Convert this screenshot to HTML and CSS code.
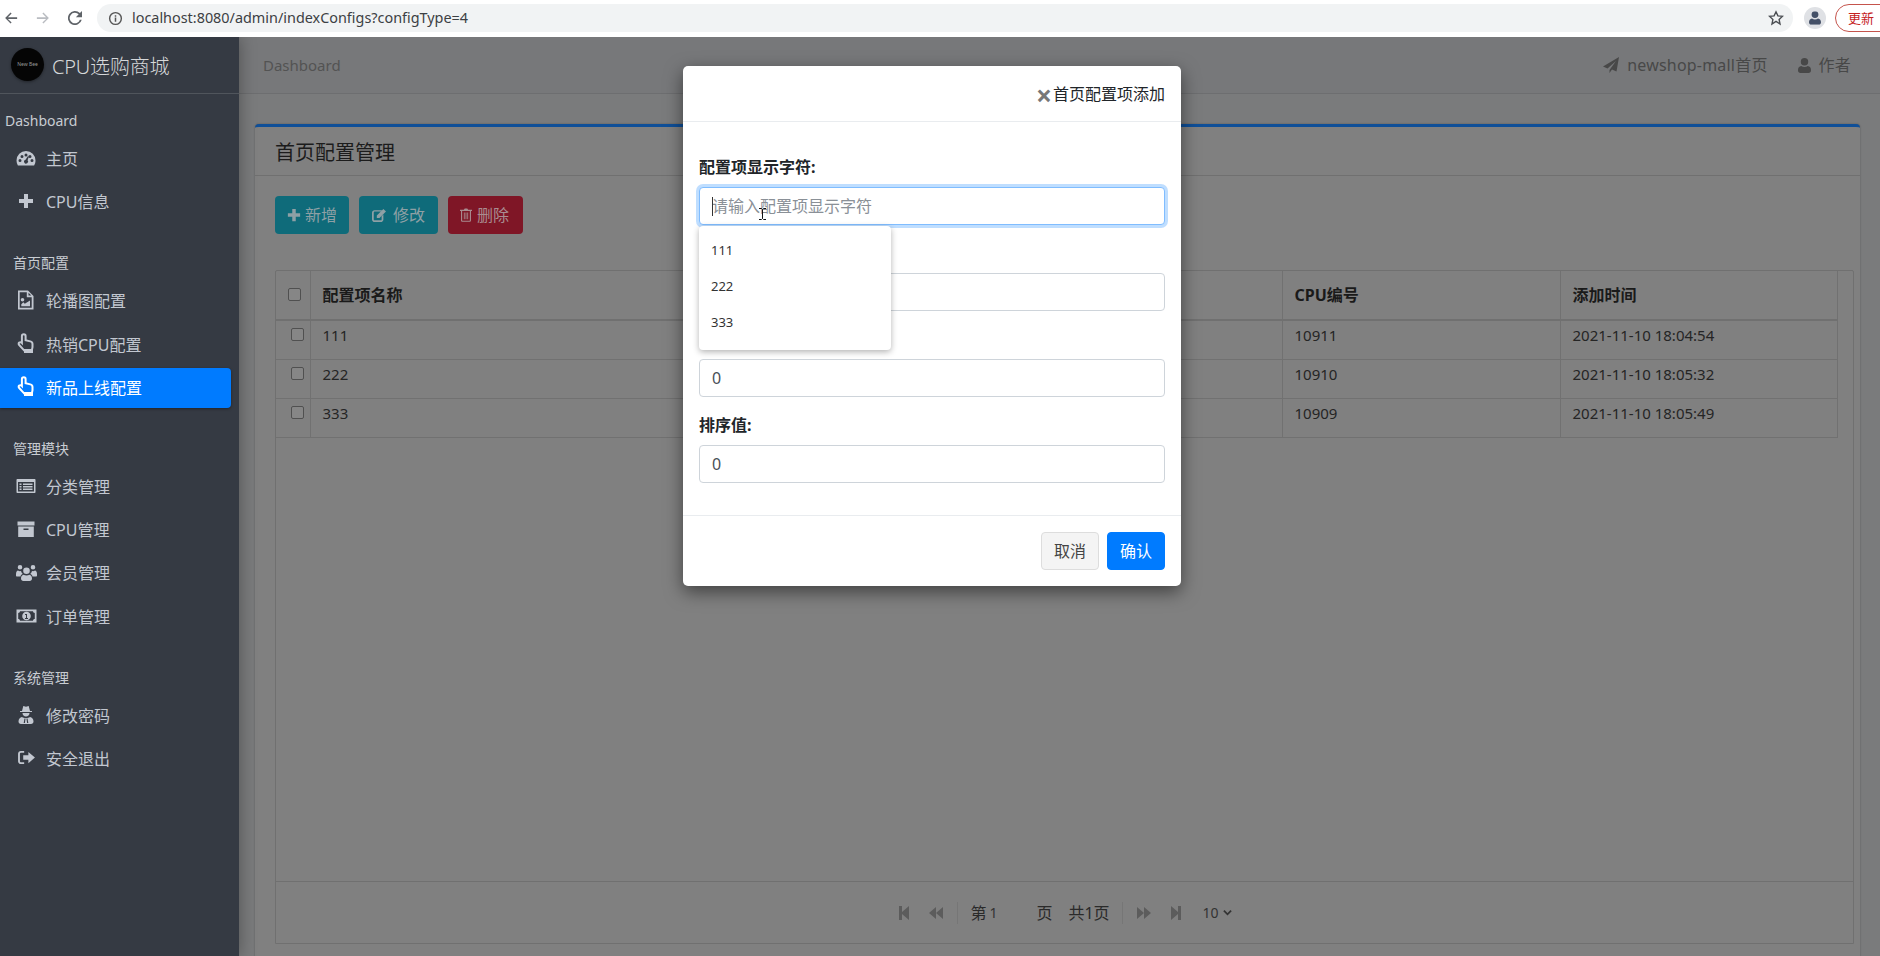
FILE: index.html
```html
<!DOCTYPE html>
<html lang="zh-CN">
<head>
<meta charset="utf-8">
<title>首页配置管理</title>
<link rel="stylesheet" href="styles.css">
</head>
<body>
<svg class="sprite" xmlns="http://www.w3.org/2000/svg">
  <symbol id="i-plus" viewBox="0 0 16 16"><path d="M6 1h4v5h5v4h-5v5H6v-5H1V6h5z"/></symbol>
  <symbol id="i-gauge" viewBox="0 0 20 16"><path fill-rule="evenodd" d="M10 1a9.500 9.500 0 0 1 9.500 9.500c0 1.900-.5 3.500-1.400 4.900H1.900A9.300 9.300 0 0 1 .5 10.500 9.500 9.500 0 0 1 10 1zM4 9a1.500 1.500 0 1 0 0 3 1.500 1.500 0 0 0 0-3zm2-4a1.500 1.500 0 1 0 0 3 1.500 1.500 0 0 0 0-3zm4-1.500a1.500 1.500 0 1 0 0 3 1.500 1.500 0 0 0 0-3zM14 5a1.500 1.500 0 1 0 0 3 1.500 1.500 0 0 0 0-3zm2 4a1.500 1.500 0 1 0 0 3 1.500 1.500 0 0 0 0-3zM12.200 5.800 9.500 9.700a2 2 0 1 0 2.100.6l1.400-4.300z"/></symbol>
  <symbol id="i-image" viewBox="0 0 17 20"><path fill-rule="evenodd" d="M1 .5h10l5.500 5.500v13.500H1zM2.700 2.200v15.600h12V7.300H9.800V2.200zm8.800.6v2.800h2.800zM5.500 8a1.800 1.800 0 1 1 0 3.600 1.800 1.800 0 0 1 0-3.600zM13 10.500v5.700H4.300v-2l2-2 1.500 1.500z"/></symbol>
  <symbol id="i-hand" viewBox="0 0 18 21"><path fill="none" stroke="currentColor" stroke-width="2" d="M6.800 1.200c1 0 1.800.8 1.800 1.800v4.300l4.700 1.100c1.200.3 2.200 1.200 2.200 2.500v3.200l-.7 3.500H7.300L2.200 12c-.8-.8-.7-1.800 0-2.400.8-.6 1.700-.5 2.500.2l.2.200V3c0-1 .9-1.800 1.900-1.800z"/><path d="M7 16h9v4H7z"/></symbol>
  <symbol id="i-list" viewBox="0 0 20 16"><path fill-rule="evenodd" d="M1.500 1h17c.600 0 1 .4 1 1v12c0 .6-.4 1-1 1h-17c-.6 0-1-.4-1-1V2c0-.6.4-1 1-1zM2 4v9.500h16V4zm1.500 1.500h2v1.500h-2zm3.500 0h9.500V7H7zM3.500 8h2v1.500h-2zM7 8h9.500v1.500H7zm-3.500 2.500h2V12h-2zm3.500 0h9.500V12H7z"/></symbol>
  <symbol id="i-archive" viewBox="0 0 18 16"><path fill-rule="evenodd" d="M.5.500h17v4H.5zM1.200 5.500h15.600V16H1.200zM6.500 7.500v1.500h5V7.500z"/></symbol>
  <symbol id="i-users" viewBox="0 0 21 17"><path d="M4 1a2.300 2.300 0 1 1 0 4.600A2.300 2.300 0 0 1 4 1zm13 0a2.300 2.300 0 1 1 0 4.600A2.300 2.300 0 0 1 17 1zM10.500 3.500a3.300 3.300 0 1 1 0 6.600 3.300 3.300 0 0 1 0-6.600zM0 10c0-2 1-3.500 2-3.500.8.600 2 .8 3 .5.300 1.200 1 2.300 1.800 3-1 .3-2 1.200-2.300 2.500H1c-.6 0-1-.4-1-1zm21 0c0-2-1-3.500-2-3.500-.8.600-2 .8-3 .5-.3 1.200-1 2.300-1.800 3 1 .3 2 1.200 2.300 2.500H20c.6 0 1-.4 1-1zM7.500 10.700c1.700 1.100 4.300 1.100 6 0 1.500.2 2.500 1.700 2.500 3.800 0 1.500-1 2.500-2.300 2.500H7.300C6 17 5 16 5 14.500c0-2.100 1-3.600 2.500-3.800z"/></symbol>
  <symbol id="i-money" viewBox="0 0 21 14"><path fill-rule="evenodd" d="M.500.500h20v13H.500zM4 2.300c0 1-.8 1.700-1.800 1.700v6c1 0 1.800.7 1.800 1.700h13c0-1 .8-1.700 1.800-1.700V4c-1 0-1.800-.7-1.800-1.700zM10.500 2.700a4.300 4.300 0 1 1 0 8.600 4.300 4.300 0 0 1 0-8.600zM9 5v1h1v3H9v1h3V9h-1V5z"/></symbol>
  <symbol id="i-secret" viewBox="0 0 16 20"><path fill-rule="evenodd" d="M5.300 1 8 1.800 10.700 1l1.300 5H14v1H2V6h2zM4.500 8h7c0 2-1.500 3.500-3.500 3.500S4.500 10 4.500 8zM4 12c1 .7 2.300 1 4 1s3-.3 4-1c2 .3 3.500 2 3.500 4.500 0 1.500-1 2.500-2.500 2.500H3c-1.500 0-2.500-1-2.500-2.500C.5 14 2 12.300 4 12zm2.500 1.500L5.700 18h1.200l.6-4.500zm3 0-1 0 .6 4.500h1.200z"/></symbol>
  <symbol id="i-signout" viewBox="0 0 18 16"><path d="M6.500 1v2H3C2.400 3 2 3.400 2 4v8c0 .6.400 1 1 1h3.500v2H3c-1.700 0-3-1.300-3-3V4c0-1.700 1.300-3 3-3zM11 2l7 6-7 6v-3.500H5.500v-5H11z"/></symbol>
  <symbol id="i-edit" viewBox="0 0 16 16"><path d="M11 9.500V13c0 .6-.4 1-1 1H3c-.6 0-1-.4-1-1V5c0-.6.4-1 1-1h7l1.500-1.500H3C1.300 2.500 0 3.800 0 5.500v7.500c0 1.700 1.300 3 3 3h7c1.700 0 3-1.300 3-3V7.500zM13 1l3 3-7.500 7.500H5.500v-3z"/></symbol>
  <symbol id="i-trash" viewBox="0 0 14 16"><path fill-rule="evenodd" d="M4.500 2 5.500.5h3L9.500 2H14v1.200h-1.200V14c0 1-.7 2-1.800 2H3c-1.100 0-1.800-1-1.800-2V3.200H0V2zm-2 1.200V14c0 .5.300.8.500.8h8c.2 0 .5-.3.500-.8V3.200zM4.500 5h1v8h-1zm2 0h1v8h-1zm2 0h1v8h-1z"/></symbol>
  <symbol id="i-plane" viewBox="0 0 16 16"><path d="M16 0 13.500 14.500 9 12.500 6.500 16V13L13 4 4.500 11.500 0 9.500z"/></symbol>
  <symbol id="i-user" viewBox="0 0 14 16"><path d="M7 0a4 4 0 1 1 0 8 4 4 0 0 1 0-8zM3.500 8.500c1 .8 2.200 1.200 3.500 1.200s2.500-.4 3.500-1.200C12.800 8.800 14 10.500 14 13c0 1.800-1.100 3-2.700 3H2.700C1.100 16 0 14.800 0 13c0-2.500 1.200-4.200 3.500-4.500z"/></symbol>
  <symbol id="i-first" viewBox="0 0 10 14"><path d="M0 0h3v6L10 0v14L3 8v6H0z"/></symbol>
  <symbol id="i-prev" viewBox="0 0 14 14"><path d="M0 7l7-6v6l7-6v12L7 7v6z"/></symbol>
  <symbol id="i-next" viewBox="0 0 14 14"><path d="M14 7 7 1v6L0 1v12l7-6v6z"/></symbol>
  <symbol id="i-last" viewBox="0 0 10 14"><path d="M10 0H7v6L0 0v14l7-6v6h3z"/></symbol>
</svg>

<header class="chrome">
  <svg class="nav-glyph" viewBox="0 0 16 16"><path d="M15 7H4.500l4.200-4.200L7.500 1.700 1.300 8l6.200 6.300 1.200-1.100L4.500 9H15z"/></svg>
  <svg class="nav-glyph nav-glyph-off" viewBox="0 0 16 16"><path d="M1 7h10.500L7.300 2.800l1.200-1.100L14.700 8l-6.200 6.300-1.200-1.100L11.500 9H1z"/></svg>
  <svg class="nav-glyph nav-glyph-last" viewBox="0 0 16 16"><path d="M13.600 2.400A8 8 0 1 0 15.700 10h-2.100a6 6 0 1 1-1.400-6.200L9 7h7V0z"/></svg>
  <div class="omnibox">
    <svg class="info-glyph" viewBox="0 0 16 16"><path fill-rule="evenodd" d="M8 1a7 7 0 1 1 0 14A7 7 0 0 1 8 1zm0 1.500a5.500 5.500 0 1 0 0 11 5.500 5.500 0 0 0 0-11zM7.200 7h1.600v4.500H7.200zm0-2.500h1.600V6H7.200z"/></svg>
    <span class="url">localhost:8080/admin/indexConfigs?configType=4</span>
    <svg class="star-glyph" viewBox="0 0 16 16"><path fill="none" stroke="currentColor" stroke-width="1.400" d="m8 1.800 1.900 4.100 4.500.5-3.300 3.100.9 4.500L8 11.300l-4 2.700.9-4.500L1.600 6.400l4.500-.5z"/></svg>
  </div>
  <div class="avatar"><svg viewBox="0 0 14 16"><use href="#i-user"/></svg></div>
  <div class="update-pill">更新</div>
</header>

<div class="app">
  <aside class="sidebar">
    <div class="brand">
      <div class="brand-logo">New Bee</div>
      <span class="brand-name">CPU选购商城</span>
    </div>
    <nav class="menu">
      <div class="menu-head menu-head-first">Dashboard</div>
      <a class="menu-item"><svg class="ic ic-gauge"><use href="#i-gauge"/></svg>主页</a>
      <a class="menu-item"><svg class="ic ic-plus"><use href="#i-plus"/></svg>CPU信息</a>

      <div class="menu-head menu-gap">首页配置</div>
      <a class="menu-item"><svg class="ic ic-image"><use href="#i-image"/></svg>轮播图配置</a>
      <a class="menu-item"><svg class="ic ic-hand"><use href="#i-hand"/></svg>热销CPU配置</a>
      <a class="menu-item menu-item-active"><svg class="ic ic-hand"><use href="#i-hand"/></svg>新品上线配置</a>

      <div class="menu-head menu-gap">管理模块</div>
      <a class="menu-item"><svg class="ic ic-list"><use href="#i-list"/></svg>分类管理</a>
      <a class="menu-item"><svg class="ic ic-archive"><use href="#i-archive"/></svg>CPU管理</a>
      <a class="menu-item"><svg class="ic ic-users"><use href="#i-users"/></svg>会员管理</a>
      <a class="menu-item"><svg class="ic ic-money"><use href="#i-money"/></svg>订单管理</a>

      <div class="menu-head menu-gap">系统管理</div>
      <a class="menu-item"><svg class="ic ic-secret"><use href="#i-secret"/></svg>修改密码</a>
      <a class="menu-item"><svg class="ic ic-signout"><use href="#i-signout"/></svg>安全退出</a>
    </nav>
  </aside>

  <main class="main">
    <div class="topbar">
      <span class="crumb">Dashboard</span>
      <div class="top-links">
        <a class="top-link"><svg class="top-icon"><use href="#i-plane"/></svg>newshop-mall首页</a>
        <a class="top-link"><svg class="top-icon top-icon-user"><use href="#i-user"/></svg>作者</a>
      </div>
    </div>
    <section class="content">
      <div class="card">
        <h1 class="card-title">首页配置管理</h1>
        <div class="card-body">
          <div class="toolbar">
            <button class="btn btn-info"><svg class="btn-icon"><use href="#i-plus"/></svg>新增</button>
            <button class="btn btn-info btn-wide"><svg class="btn-icon"><use href="#i-edit"/></svg>修改</button>
            <button class="btn btn-danger"><svg class="btn-icon btn-icon-sm"><use href="#i-trash"/></svg>删除</button>
          </div>
          <div class="grid">
            <table class="grid-table">
              <colgroup>
                <col class="col-check"><col class="col-name"><col class="col-link"><col class="col-sort"><col class="col-cpu"><col class="col-time">
              </colgroup>
              <thead>
                <tr>
                  <th class="cell-check-head"><input type="checkbox" class="check"></th>
                  <th>配置项名称</th><th>跳转链接</th><th>排序值</th><th>CPU编号</th><th>添加时间</th>
                </tr>
              </thead>
              <tbody>
                <tr><td class="cell-check"><input type="checkbox" class="check"></td><td>111</td><td>##</td><td>1</td><td>10911</td><td>2021-11-10 18:04:54</td></tr>
                <tr><td class="cell-check"><input type="checkbox" class="check"></td><td>222</td><td>##</td><td>2</td><td>10910</td><td>2021-11-10 18:05:32</td></tr>
                <tr><td class="cell-check"><input type="checkbox" class="check"></td><td>333</td><td>##</td><td>3</td><td>10909</td><td>2021-11-10 18:05:49</td></tr>
              </tbody>
            </table>
            <div class="pager">
              <svg class="pg-icon pg-end"><use href="#i-first"/></svg>
              <svg class="pg-icon pg-prev"><use href="#i-prev"/></svg>
              <span class="pg-sep"></span>
              <span class="pg-text">第</span><span class="pg-input">1</span><span class="pg-text">页</span>
              <span class="pg-text pg-total">共1页</span>
              <span class="pg-sep"></span>
              <svg class="pg-icon pg-next"><use href="#i-next"/></svg>
              <svg class="pg-icon pg-end"><use href="#i-last"/></svg>
              <span class="pg-size">10<svg class="pg-chevron" viewBox="0 0 10 7"><path fill="none" stroke="currentColor" stroke-width="2" d="m1 1.500 4 4 4-4"/></svg></span>
            </div>
          </div>
        </div>
      </div>
    </section>
  </main>

  <div class="modal" role="dialog">
    <div class="modal-header">
      <span class="modal-close">×</span>
      <span class="modal-title">首页配置项添加</span>
    </div>
    <form class="modal-body">
      <div class="field">
        <label class="field-label">配置项显示字符:</label>
        <div class="input-wrap">
          <input class="input input-focus" placeholder="请输入配置项显示字符">
          <span class="text-caret"></span>
          <svg class="ibeam" viewBox="0 0 7 12"><path fill="none" stroke="#111" d="M0 .5h2.500l1 1 1-1H7M3.500 1.500v9M0 11.500h2.500l1-1 1 1H7"/></svg>
          <ul class="suggest">
            <li>111</li>
            <li>222</li>
            <li>333</li>
          </ul>
        </div>
      </div>
      <div class="field">
        <label class="field-label">跳转链接:</label>
        <input class="input" placeholder="">
      </div>
      <div class="field">
        <label class="field-label">商品编号:</label>
        <input class="input" value="0">
      </div>
      <div class="field">
        <label class="field-label">排序值:</label>
        <input class="input" value="0">
      </div>
    </form>
    <div class="modal-footer">
      <button class="mbtn mbtn-light">取消</button>
      <button class="mbtn mbtn-primary">确认</button>
    </div>
  </div>
</div>
</body>
</html>
```

FILE: styles.css
```css
* { box-sizing: border-box; }
html, body { margin: 0; padding: 0; height: 100%; }
body {
  width: 1880px;
  height: 956px;
  overflow: hidden;
  position: relative;
  background: #fff;
  font-family: "Noto Sans", "Noto Sans CJK SC", sans-serif;
  font-size: 16px;
  line-height: 24px;
  color: #222;
}
.sprite { display: none; }
svg { fill: currentColor; display: block; flex: none; }

/* browser chrome */
.chrome {
  height: 37px;
  padding: 4px 0 5px;
  display: flex;
  align-items: center;
  background: #fff;
  overflow: hidden;
}
.nav-glyph { width: 14px; height: 14px; margin-left: 4px; margin-right: 14px; color: #5f6368; }
.nav-glyph-off { color: #b9bcc1; }
.nav-glyph-last { margin-right: 15px; }
.omnibox {
  width: 1696px;
  height: 28px;
  flex: none;
  padding: 0 9px 0 11px;
  display: flex;
  align-items: center;
  background: #f1f3f4;
  border-radius: 14px;
  color: #5f6368;
}
.info-glyph { width: 15px; height: 15px; margin-right: 9px; color: #555; }
.url { flex: 1; font-size: 14.400px; color: #3c4043; line-height: 20px; }
.star-glyph { width: 16px; height: 16px; color: #4a4d52; }
.avatar {
  width: 22px;
  height: 22px;
  flex: none;
  margin-left: 11px;
  border-radius: 50%;
  background: #dfe1e5;
  color: #445067;
  display: flex;
  align-items: center;
  justify-content: center;
}
.avatar svg { width: 12px; height: 14px; }
.update-pill {
  width: 60px;
  height: 28px;
  margin-left: 9px;
  padding-left: 12px;
  flex: none;
  border: 1px solid #c5544c;
  border-radius: 14px;
  color: #c5221f;
  font-size: 13px;
  line-height: 26px;
}

/* layout */
.app { display: flex; height: 919px; position: relative; overflow: hidden; }

.sidebar {
  width: 239px;
  flex: none;
  background: #353a43;
  color: #c2c7d0;
  box-shadow: 0 0 16px rgba(0, 0, 0, .35);
  position: relative;
  z-index: 2;
}
.brand {
  height: 57px;
  padding: 0 0 1px 11px;
  display: flex;
  align-items: center;
  gap: 8px;
  border-bottom: 1px solid #50555c;
}
.brand-logo {
  width: 33px;
  height: 33px;
  border-radius: 50%;
  background: #050505;
  color: #9a9a9a;
  font-size: 5px;
  line-height: 33px;
  text-align: center;
  white-space: nowrap;
  box-shadow: 0 1px 3px rgba(0, 0, 0, .4);
}
.brand-name { padding-top: 4px; font-size: 20px; font-weight: 300; color: #d6d8da; letter-spacing: -.2px; }
.menu { padding-top: 9px; }
.menu-head {
  height: 36px;
  padding-left: 13px;
  font-size: 14px;
  line-height: 36px;
  color: #c8ccd2;
}
.menu-head-first { padding-left: 5px; }
.menu-gap { margin-top: 23px; }
.menu-item {
  height: 40px;
  width: 231px;
  margin-bottom: 3.250px;
  padding-left: 14px;
  display: flex;
  align-items: center;
  gap: 8px;
  font-size: 16px;
  color: #c2c7d0;
  border-radius: 0 4px 4px 0;
}
.menu-item-active {
  background: #007bff;
  color: #fff;
  box-shadow: 0 1px 3px rgba(0, 0, 0, .4);
}
.ic { margin: 0 auto; }
.ic-gauge { width: 20px; height: 16px; margin: -2px 2px 0; }
.ic-plus { width: 16px; height: 16px; margin: -3px 4px 0; }
.ic-image { width: 17px; height: 20px; margin: -2px 4px 0 3px; }
.ic-hand { width: 18px; height: 21px; margin: -2px 3px 0; }
.ic-list { width: 20px; height: 16px; margin: -2px 2px 0; }
.ic-archive { width: 18px; height: 16px; margin: -2px 3px 0; }
.ic-users { width: 21px; height: 17px; margin: -2px 1px 0 2px; }
.ic-money { width: 21px; height: 14px; margin: -2px 1px 0 2px; }
.ic-secret { width: 16px; height: 20px; margin: -2px 4px 0; }
.ic-signout { width: 17px; height: 15px; margin: -2px 3px 0 4px; }

/* dimmed page behind the dialog */
.main { flex: 1; min-width: 0; background: #7a7b7c; }
.topbar {
  height: 57px;
  padding: 0 29px 0 24px;
  display: flex;
  align-items: center;
  justify-content: space-between;
  background: #77787a;
  border-bottom: 1px solid #6d6e70;
  color: #4a4a4a;
}
.crumb { font-size: 15px; color: #535353; }
.top-links { display: flex; gap: 30px; }
.top-link { display: flex; align-items: center; gap: 8px; font-size: 16px; color: #484848; letter-spacing: .2px; }
.top-icon { width: 16px; height: 16px; }
.top-icon-user { width: 13px; height: 15px; }

.content { padding: 30px 20px 0 16px; }
.card {
  height: 900px;
  background: #808080;
  border-top: 3px solid #0f4f98;
  border-radius: 4px 4px 0 0;
  box-shadow: 0 0 2px rgba(0, 0, 0, .3);
}
.card-title {
  height: 49px;
  margin: 0;
  padding: 3px 20px 0;
  font-size: 20px;
  font-weight: 400;
  line-height: 46px;
  color: #1c1c1c;
  border-bottom: 1px solid #707070;
}
.card-body { padding: 20px 6px 0 20px; }
.toolbar { display: flex; gap: 10px; margin-bottom: 36px; }
.btn {
  height: 38px;
  padding: 0 12px;
  display: flex;
  align-items: center;
  gap: 4px;
  border: 0;
  border-radius: 4px;
  font: inherit;
  color: #8ea0a5;
}
.btn-wide { gap: 7px; padding: 0 13px; }
.btn-info { background: #0f6b7a; }
.btn-danger { background: #7f1626; gap: 5px; padding-right: 14px; color: #a98c90; }
.btn-icon { width: 14px; height: 14px; }
.btn-icon-sm { width: 12px; height: 14px; }

.grid {
  height: 674px;
  border: 1px solid #707070;
  border-radius: 2px 2px 0 0;
  display: flex;
  flex-direction: column;
  justify-content: space-between;
}
.grid-table {
  width: 1561px;
  table-layout: fixed;
  border-collapse: collapse;
  font-size: 15px;
  color: #252525;
}
.col-check { width: 34px; }
.col-name { width: 380px; }
.col-link { width: 300px; }
.col-sort { width: 292px; }
.col-cpu { width: 278px; }
.col-time { width: 277px; }
.grid-table th {
  height: 49px;
  padding: 0 12px;
  text-align: left;
  font-size: 16px;
  font-weight: 700;
  color: #1a1a1a;
  border-right: 1px solid #717171;
  border-bottom: 2px solid #707070;
}
.grid-table td {
  height: 39px;
  padding: 2px 12px 0;
  vertical-align: top;
  border-right: 1px solid #717171;
  border-bottom: 1px solid #717171;
}
.grid-table th.cell-check-head { padding: 0 0 2px 12px; }
.grid-table td.cell-check { padding: 7px 0 0 15px; }
.check {
  appearance: none;
  display: block;
  width: 13px;
  height: 13px;
  margin: 0;
  background: #868686;
  border: 1px solid #505050;
  border-radius: 2px;
}

.pager {
  height: 62px;
  padding-left: 2px;
  display: flex;
  align-items: center;
  justify-content: center;
  border-top: 1px solid #707070;
  font-size: 16px;
  color: #2a2a2a;
}
.pg-icon { color: #5c5c5c; height: 14px; }
.pg-end { width: 10px; }
.pg-prev { width: 14px; margin: 0 14px 0 20px; }
.pg-next { width: 14px; margin: 0 20px 0 2px; }
.pg-sep { width: 1px; height: 22px; background: #767676; margin-right: 12px; }
.pg-text { line-height: 24px; }
.pg-input { width: 50px; padding-left: 3px; font-size: 14px; color: #333; }
.pg-total { margin-left: 16px; margin-right: 12px; }
.pg-size {
  margin-left: 22px;
  display: flex;
  align-items: center;
  gap: 4px;
  font-size: 14px;
  color: #333;
}
.pg-chevron { width: 9px; height: 7px; }

/* dialog */
.modal {
  position: absolute;
  left: 683px;
  top: 29px;
  width: 498px;
  background: #fff;
  border-radius: 5px;
  box-shadow: 0 6px 18px rgba(0, 0, 0, .5);
  z-index: 3;
  color: #212529;
}
.modal-header {
  height: 56px;
  padding: 0 16px;
  display: flex;
  align-items: center;
  justify-content: flex-end;
  gap: 1px;
  border-bottom: 1px solid #e9ecef;
}
.modal-close { font-size: 28px; font-weight: 700; line-height: 24px; color: #777; padding-top: 3px; }
.modal-title { font-size: 16px; }
.modal-body { margin: 0; padding: 33px 16px 16px; }
.field { margin-bottom: 16px; }
.field-label { display: block; margin-bottom: 8px; font-weight: 700; line-height: 24px; }
.input-wrap { position: relative; }
.input {
  display: block;
  width: 100%;
  height: 38px;
  padding: 0 12px;
  border: 1px solid #ced4da;
  border-radius: 4px;
  background: #fff;
  outline: 0;
  font: inherit;
  color: #495057;
}
.input::placeholder { color: #8a9097; }
.input-focus { border-color: #80bdff; box-shadow: 0 0 0 3px rgba(0, 123, 255, .25); }
.text-caret {
  position: absolute;
  left: 13px;
  top: 10px;
  width: 1px;
  height: 19px;
  background: #333;
}
.ibeam { position: absolute; left: 60px; top: 21px; width: 7px; height: 12px; }
.suggest {
  position: absolute;
  left: 0;
  top: 39px;
  width: 192px;
  height: 124px;
  margin: 0;
  padding: 6px 0 0;
  list-style: none;
  background: #fff;
  border-radius: 4px;
  box-shadow: 0 2px 6px rgba(0, 0, 0, .3);
  font-size: 13px;
  z-index: 1;
}
.suggest li { height: 36px; padding: 4px 12px 0; line-height: 28px; color: #333; }
.modal-footer {
  padding: 16px;
  display: flex;
  justify-content: flex-end;
  gap: 8px;
  border-top: 1px solid #e9ecef;
}
.mbtn {
  width: 58px;
  height: 38px;
  padding: 0;
  border-radius: 4px;
  font: inherit;
}
.mbtn-light { background: #f4f4f4; border: 1px solid #ddd; color: #444; }
.mbtn-primary { background: #007bff; border: 1px solid #007bff; color: #fff; }
```
